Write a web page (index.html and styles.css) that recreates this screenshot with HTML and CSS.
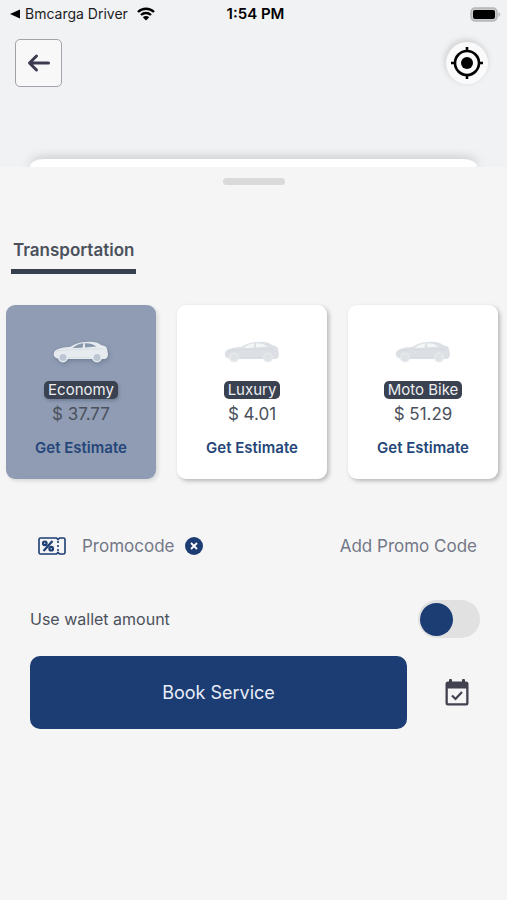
FILE: index.html
```html
<!DOCTYPE html>
<html lang="en">
<head>
<meta charset="utf-8">
<meta name="viewport" content="width=device-width, initial-scale=1">
<title>Book a ride</title>
<link rel="stylesheet" href="styles.css">
</head>
<body>
<svg class="defs" width="0" height="0" aria-hidden="true">
  <symbol id="car" viewBox="0 0 56 22">
    <path class="car-body" d="M1 15 Q0 11 3 9 Q9 6 17 6 Q25 1 33 1 Q43 0 48 4 Q54 5 54 8 L55 13 Q55 18 51 18 L6 18 Q2 17 1 15Z"/>
    <path class="car-line" d="M3 10 Q18 8 50 8 M14 16.500 H38"/>
    <path class="car-window" d="M19.500 7 Q24 3 30.500 2.300 L29.500 6.700Z M32 2.200 Q39 2 43.500 5.600 L32 6.600Z"/>
    <circle class="car-wheel" cx="10" cy="16.500" r="5"/>
    <circle class="car-wheel" cx="44" cy="16.500" r="5"/>
    <circle class="car-hub" cx="10" cy="16.500" r="3.500"/>
    <circle class="car-hub" cx="44" cy="16.500" r="3.500"/>
  </symbol>
</svg>

<header class="top">
  <div class="status">
    <div class="status-app">
      <svg width="10" height="10" viewBox="0 0 10 10" aria-hidden="true"><path d="M0 5 L10 0.500 V9.500Z"/></svg>
      <span>Bmcarga Driver</span>
      <svg class="wifi" width="18" height="14" viewBox="0 0 18 14" aria-hidden="true">
        <path class="wave" d="M1 5 A11.500 11.500 0 0 1 17 5 M4 8 A7.300 7.300 0 0 1 14 8"/>
        <path d="M9 13.500 L5.800 10.200 A4.600 4.600 0 0 1 12.200 10.200Z"/>
      </svg>
    </div>
    <time class="clock">1:54 PM</time>
    <svg class="battery" width="31" height="15" viewBox="0 0 31 15" aria-hidden="true">
      <rect x="1" y="1" width="26" height="13" rx="4" fill="#c9cacc" stroke="#b4b5b7" stroke-width="1.500"/>
      <rect x="3" y="3" width="22" height="9" rx="2"/>
      <path d="M28.500 5 Q32 7.500 28.500 10Z" fill="#b4b5b7"/>
    </svg>
  </div>
  <div class="toolbar">
    <button class="back" type="button" aria-label="Back">
      <svg width="24" height="20" viewBox="0 0 24 20" aria-hidden="true"><path d="M21.500 10 H3 M9.500 3 L2.500 10 L9.500 17"/></svg>
    </button>
    <button class="locate" type="button" aria-label="My location">
      <svg width="34" height="34" viewBox="0 0 34 34" aria-hidden="true">
        <circle cx="17" cy="17" r="12" fill="none" stroke="#000" stroke-width="2.600"/>
        <circle cx="17" cy="17" r="6"/>
        <path d="M17 1 V6 M17 28 V33 M1 17 H6 M28 17 H33" stroke="#000" stroke-width="2.600"/>
      </svg>
    </button>
  </div>
  <div class="peek"></div>
</header>

<main class="sheet">
  <div class="handle"></div>
  <nav class="tabs"><button class="tab" type="button" aria-current="true">Transportation</button></nav>

  <section class="cards">
    <article class="card selected">
      <svg class="car" width="56" height="22" aria-hidden="true"><use href="#car"/></svg>
      <h2 class="badge">Economy</h2>
      <p class="price">$ 37.77</p>
      <button class="estimate" type="button">Get Estimate</button>
    </article>
    <article class="card">
      <svg class="car" width="56" height="22" aria-hidden="true"><use href="#car"/></svg>
      <h2 class="badge">Luxury</h2>
      <p class="price">$ 4.01</p>
      <button class="estimate" type="button">Get Estimate</button>
    </article>
    <article class="card">
      <svg class="car" width="56" height="22" aria-hidden="true"><use href="#car"/></svg>
      <h2 class="badge">Moto Bike</h2>
      <p class="price">$ 51.29</p>
      <button class="estimate" type="button">Get Estimate</button>
    </article>
  </section>

  <div class="row promo">
    <svg class="ticket" width="28" height="18" viewBox="0 0 28 18" aria-hidden="true">
      <path d="M2.500 1 H18.500 L20 2.500 L21.500 1 H25.500 Q27 1 27 2.500 V15.500 Q27 17 25.500 17 H21.500 L20 15.500 L18.500 17 H2.500 Q1 17 1 15.500 V2.500 Q1 1 2.500 1Z"/>
      <path d="M20 4 V6 M20 8 V10 M20 12 V14"/>
      <path class="thick" d="M14.500 4 L5.500 14"/>
      <circle class="thick" cx="6.800" cy="6.300" r="1.800"/>
      <circle class="thick" cx="13.200" cy="11.700" r="1.800"/>
    </svg>
    <span class="promo-label">Promocode</span>
    <button class="clear" type="button" aria-label="Remove promo code">
      <svg width="18" height="18" viewBox="0 0 18 18" aria-hidden="true"><circle cx="9" cy="9" r="9"/><path d="M6 6 L12 12 M12 6 L6 12"/></svg>
    </button>
    <button class="add" type="button">Add Promo Code</button>
  </div>

  <div class="row wallet">
    <label for="wallet">Use wallet amount</label>
    <input id="wallet" class="switch" type="checkbox" role="switch">
  </div>

  <div class="row actions">
    <button class="book" type="button">Book Service</button>
    <button class="schedule" type="button" aria-label="Schedule">
      <svg width="24" height="27" viewBox="0 0 24 27" aria-hidden="true">
        <path d="M3 2.500 H21 Q23.500 2.500 23.500 5 V24 Q23.500 26.500 21 26.500 H3 Q0.500 26.500 0.500 24 V5 Q0.500 2.500 3 2.500Z M2.800 9.500 V24.200 H21.200 V9.500Z" fill-rule="evenodd"/>
        <rect x="4" y="0" width="3" height="5" rx="1"/>
        <rect x="17" y="0" width="3" height="5" rx="1"/>
        <path class="tick" d="M7 16.500 L10.500 20 L17 13"/>
      </svg>
    </button>
  </div>
</main>
</body>
</html>
```
FILE: styles.css
```css
* { box-sizing: border-box; }

body {
  margin: 0;
  min-height: 100vh;
  display: flex;
  flex-direction: column;
  background: #f1f2f4;
  color: #4b515c;
  font: 16px/24px Inter, "Liberation Sans", sans-serif;
}

button {
  margin: 0;
  padding: 0;
  border: 0;
  background: none;
  color: inherit;
  font: inherit;
  cursor: pointer;
}

svg { display: block; }
.defs { position: absolute; }

.top {
  display: flex;
  flex-direction: column;
  overflow: hidden;
}

.status {
  display: grid;
  grid-template-columns: 1fr auto 1fr;
  align-items: center;
  height: 28px;
  padding: 0 6px 0 10px;
  color: #1c1c1e;
  font-size: 14px;
}

.status-app {
  display: flex;
  align-items: center;
  gap: 5px;
  white-space: nowrap;
}

.wifi { margin-left: 4px; }
.wave { fill: none; stroke: #000; stroke-width: 2.4; }
.clock { color: #000; font-size: 15px; font-weight: 600; }
.battery { justify-self: end; }

.toolbar {
  display: flex;
  justify-content: space-between;
  align-items: center;
  padding: 11px 19px 0 15px;
}

.back {
  display: grid;
  place-items: center;
  width: 47px;
  height: 48px;
  border: 1px solid #a2a3a8;
  border-radius: 5px;
  background: #f8f8f9;
}

.back path {
  fill: none;
  stroke: #3c3b50;
  stroke-width: 3;
  stroke-linecap: round;
  stroke-linejoin: round;
}

.locate {
  display: grid;
  place-items: center;
  width: 42px;
  height: 42px;
  border-radius: 50%;
  background: #fafafa;
  box-shadow: -1px -2px 6px rgba(0, 0, 0, .16);
}

.peek {
  height: 8px;
  margin: 72px 30px 0;
  border-radius: 14px 14px 0 0 / 8px 8px 0 0;
  background: #fff;
  box-shadow: 0 0 12px rgba(0, 0, 0, .26);
}

.sheet {
  flex: 1;
  padding: 11px 0 24px;
  background: #f5f5f5;
}

.handle {
  width: 62px;
  height: 7px;
  margin: 0 auto 53px;
  border-radius: 4px;
  background: #dadada;
}

.tabs { padding: 0 11px; }

.tab {
  display: block;
  padding: 0 2px 7px;
  border-bottom: 5px solid #37404e;
  font-size: 17px;
  font-weight: 600;
}

.cards {
  display: grid;
  grid-template-columns: repeat(3, 1fr);
  gap: 21px;
  margin: 31px 9px 0 6px;
}

.card {
  display: flex;
  flex-direction: column;
  align-items: center;
  padding: 36px 0 20px;
  border-radius: 9px;
  background: #fff;
  box-shadow: 2px 2px 4px rgba(0, 0, 0, .26);
}

.selected {
  background: #8f9cb3;
  box-shadow: 2px 2px 4px rgba(0, 0, 0, .12);
}

.car {
  --body: #dce0e4;
  --window: #f3f5f6;
  --wheel: #e6e9ec;
  --hub: #dfe3e6;
}

.selected .car {
  --body: #e6ebf0;
  --window: #8997ab;
  --wheel: #e6ebf0;
  --hub: #bcc7d3;
  filter: drop-shadow(1px 2px 2px rgba(50, 65, 90, .3));
}

.selected .car-window { fill: #8997ab; }
.car-body { fill: var(--body); }
.car-window { fill: var(--window); }
.car-wheel { fill: var(--wheel); }
.car-hub { fill: var(--hub); }
.car-line { fill: none; stroke: #d2d7dc; stroke-width: .6; }

.badge {
  margin: 18px 0 0;
  padding: 0 4px;
  border-radius: 5px;
  background: #3a4150;
  color: #eceef1;
  font-size: 15px;
  font-weight: 400;
  line-height: 18px;
}

.selected .badge { box-shadow: 1px 2px 3px rgba(50, 65, 90, .3); }

.price {
  margin: 3px 0 11px;
  font-size: 17px;
}

.estimate {
  color: #254679;
  font-size: 15px;
  font-weight: 600;
  line-height: 22px;
}

.row {
  display: flex;
  align-items: center;
  padding: 0 30px;
}

.promo {
  margin-top: 55px;
  color: #737887;
  font-size: 17px;
}

.ticket {
  margin: 0 16px 0 8px;
  fill: none;
  stroke: #1c3d73;
  stroke-width: 1.6;
}

.ticket .thick { stroke-width: 2.2; }
.clear { margin-left: 11px; }
.clear circle { fill: #1c3d73; }
.clear path { stroke: #fff; stroke-width: 1.8; }
.add { margin-left: auto; }

.wallet {
  justify-content: space-between;
  margin-top: 42px;
  padding-right: 27px;
}

.switch {
  appearance: none;
  display: flex;
  align-items: center;
  width: 62px;
  height: 38px;
  margin: 0;
  padding: 0 2px;
  border-radius: 19px;
  background: #e1e1e1;
}

.switch::before {
  content: "";
  width: 33px;
  height: 33px;
  border-radius: 50%;
  background: #1c3d73;
}

.switch:checked { justify-content: flex-end; }

.actions {
  gap: 38px;
  margin-top: 18px;
  padding-right: 38px;
}

.book {
  flex: 1;
  height: 73px;
  border-radius: 10px;
  background: #1c3d73;
  color: #e8edf7;
  font-size: 18px;
}

.schedule { fill: #414150; }
.tick { fill: none; stroke: #414150; stroke-width: 2.2; }
```
